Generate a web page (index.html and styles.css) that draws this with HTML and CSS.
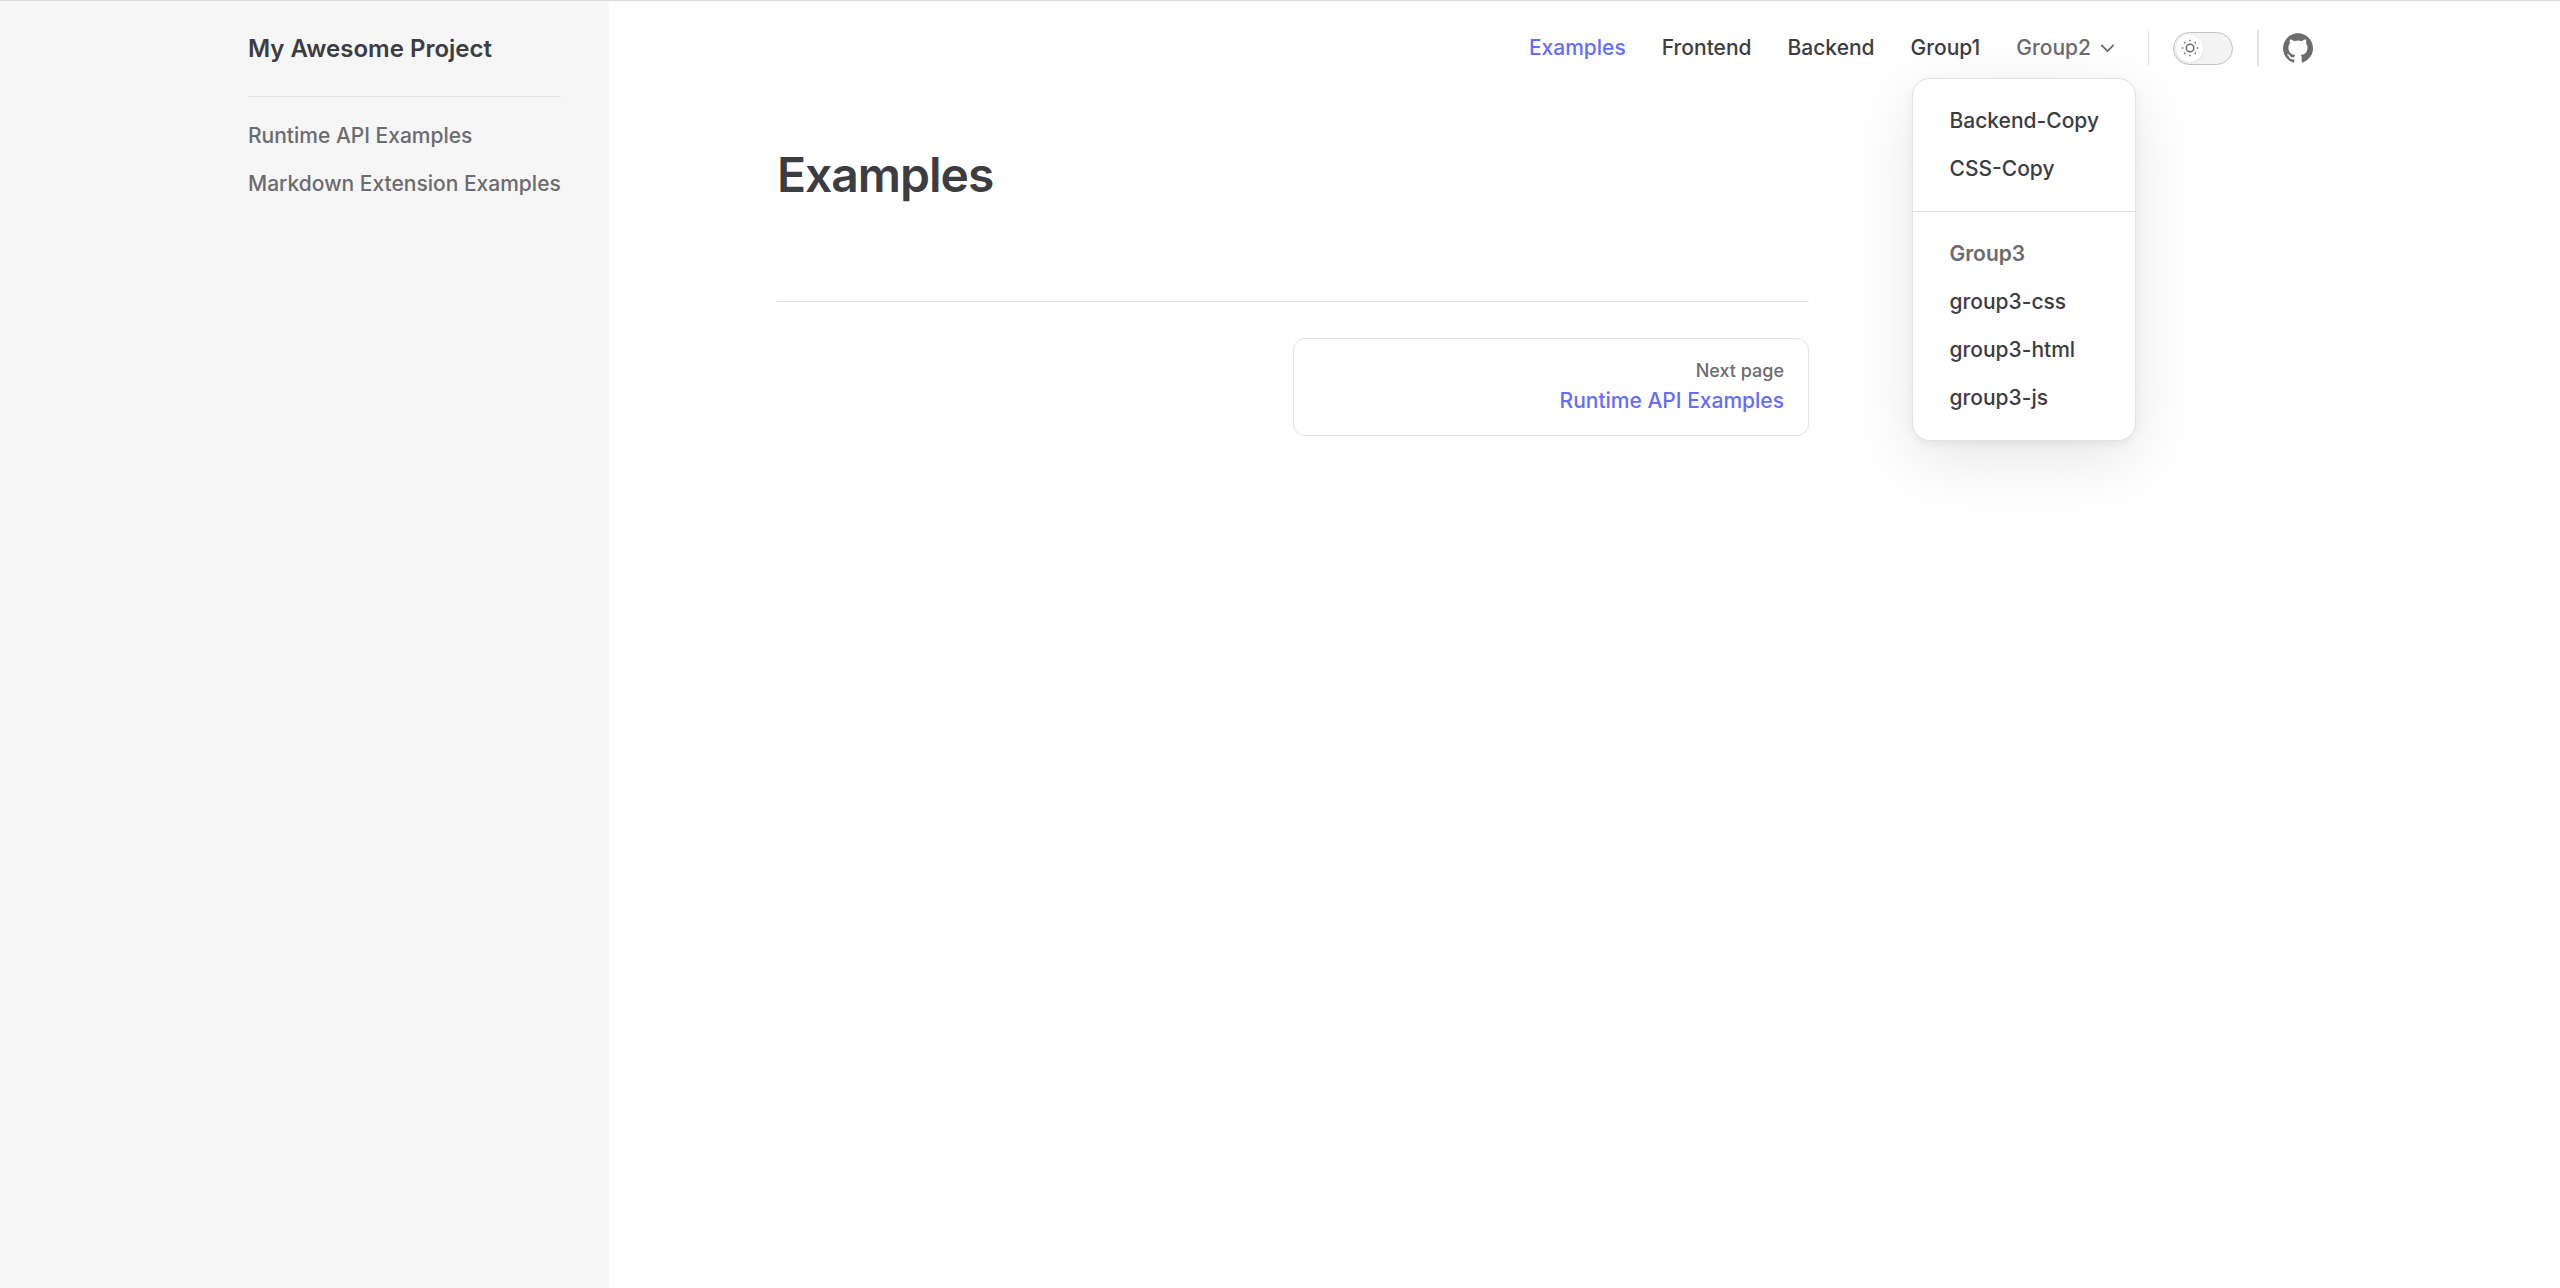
FILE: index.html
```html
<!DOCTYPE html>
<html lang="en">
<head>
<meta charset="utf-8">
<meta name="viewport" content="width=device-width, initial-scale=1">
<title>Examples | My Awesome Project</title>
<link rel="stylesheet" href="styles.css">
</head>
<body>
<div class="layout">
  <aside class="sidebar">
    <a class="site-title" href="#">My Awesome Project</a>
    <nav class="sidebar-nav" aria-label="Sidebar">
      <a href="#">Runtime API Examples</a>
      <a href="#">Markdown Extension Examples</a>
    </nav>
  </aside>
  <div class="page">
    <header class="navbar">
      <nav class="menu" aria-label="Main">
        <a class="menu-link active" href="#">Examples</a>
        <a class="menu-link" href="#">Frontend</a>
        <a class="menu-link" href="#">Backend</a>
        <a class="menu-link" href="#">Group1</a>
        <div class="flyout">
          <button class="flyout-button" type="button" aria-haspopup="true" aria-expanded="true">
            Group2
            <svg class="chevron" viewBox="0 0 24 24" aria-hidden="true"><path d="M5.5 8.5l6.5 6.5 6.5-6.5"/></svg>
          </button>
          <div class="flyout-menu">
            <div class="flyout-group">
              <a href="#">Backend-Copy</a>
              <a href="#">CSS-Copy</a>
            </div>
            <div class="flyout-group">
              <p class="flyout-title">Group3</p>
              <a href="#">group3-css</a>
              <a href="#">group3-html</a>
              <a href="#">group3-js</a>
            </div>
          </div>
        </div>
      </nav>
      <div class="appearance">
        <button class="switch" type="button" role="switch" aria-checked="false" aria-label="Toggle dark mode">
          <span class="switch-knob">
            <svg class="sun" viewBox="0 0 24 24" aria-hidden="true"><circle cx="12" cy="12" r="5"/><path d="M12 1v2M12 21v2M1 12h2M21 12h2M4.2 4.2l1.4 1.4M18.4 18.4l1.4 1.4M4.2 19.8l1.4-1.4M18.4 5.6l1.4-1.4"/></svg>
          </span>
        </button>
      </div>
      <div class="social">
        <a href="#" aria-label="GitHub">
          <svg class="github" viewBox="0 0 24 24" aria-hidden="true"><path d="M12 .297c-6.63 0-12 5.373-12 12 0 5.303 3.438 9.8 8.205 11.385.6.113.82-.258.82-.577 0-.285-.01-1.04-.015-2.04-3.338.724-4.042-1.61-4.042-1.61C4.422 18.07 3.633 17.7 3.633 17.7c-1.087-.744.084-.729.084-.729 1.205.084 1.838 1.236 1.838 1.236 1.07 1.835 2.809 1.305 3.495.998.108-.776.417-1.305.76-1.605-2.665-.3-5.466-1.332-5.466-5.93 0-1.31.465-2.38 1.235-3.22-.135-.303-.54-1.523.105-3.176 0 0 1.005-.322 3.3 1.23.96-.267 1.98-.399 3-.405 1.02.006 2.04.138 3 .405 2.28-1.552 3.285-1.23 3.285-1.23.645 1.653.24 2.873.12 3.176.765.84 1.23 1.91 1.23 3.22 0 4.61-2.805 5.625-5.475 5.92.42.36.81 1.096.81 2.22 0 1.606-.015 2.896-.015 3.286 0 .315.21.69.825.57C20.565 22.092 24 17.592 24 12.297c0-6.627-5.373-12-12-12"/></svg>
        </a>
      </div>
    </header>
    <main class="doc">
      <h1>Examples</h1>
      <footer class="doc-footer">
        <a class="pager" href="#">
          <span class="pager-desc">Next page</span>
          <span class="pager-title">Runtime API Examples</span>
        </a>
      </footer>
    </main>
  </div>
</div>
</body>
</html>
```
FILE: styles.css
```css
:root {
  --text-1: #3c3c43;
  --text-2: #6b6b70;
  --brand: #646cff;
  --divider: #e2e2e3;
  --gutter: max(0px, (100vw - 2160px) / 2);
}

* { box-sizing: border-box; }

body {
  margin: 0;
  font-family: Inter, "Liberation Sans", sans-serif;
  font-size: 21px;
  font-weight: 500;
  line-height: 36px;
  color: var(--text-1);
  background: #fff;
}

a { color: inherit; text-decoration: none; }

h1, p { margin: 0; }

button {
  padding: 0;
  border: 0;
  background: none;
  font: inherit;
  color: inherit;
  cursor: pointer;
}

.layout {
  display: flex;
  min-height: 100vh;
  border-top: 1px solid #dcdcdc;
}

.sidebar {
  flex: none;
  width: calc(var(--gutter) + 409px);
  padding: 0 48px 48px calc(var(--gutter) + 48px);
  background: #f6f6f7;
}

.site-title {
  display: flex;
  align-items: center;
  height: 96px;
  border-bottom: 1px solid var(--divider);
  font-size: 24px;
  font-weight: 600;
}

.sidebar-nav {
  display: flex;
  flex-direction: column;
  gap: 12px;
  padding-top: 21px;
  color: var(--text-2);
  white-space: nowrap;
}

.page { flex: 1; min-width: 0; }

.navbar {
  display: flex;
  justify-content: flex-end;
  align-items: center;
  height: 94px;
  padding-right: calc(var(--gutter) + 47px);
}

.menu { display: flex; }

.menu-link { padding: 0 18px; line-height: 94px; }

.active { color: var(--brand); }

.flyout { position: relative; }

.flyout-button {
  display: flex;
  align-items: center;
  gap: 6px;
  height: 94px;
  padding: 0 18px;
  color: var(--text-2);
}

.chevron {
  width: 21px;
  height: 21px;
  fill: none;
  stroke: currentColor;
  stroke-width: 2;
  stroke-linecap: round;
  stroke-linejoin: round;
}

.flyout-menu {
  position: absolute;
  top: 77px;
  right: 0;
  z-index: 1;
  min-width: 192px;
  border: 1px solid var(--divider);
  border-radius: 18px;
  background: #fff;
  box-shadow: 0 18px 66px rgba(0, 0, 0, .1), 0 3px 9px rgba(0, 0, 0, .06);
  white-space: nowrap;
}

.flyout-group { padding: 18px; }

.flyout-group + .flyout-group { border-top: 1px solid var(--divider); }

.flyout-group > * {
  display: block;
  padding: 0 18px;
  line-height: 48px;
}

.flyout-title { color: var(--text-2); font-weight: 600; }

.appearance, .social { display: flex; align-items: center; }

.appearance::before, .social::before {
  content: "";
  width: 1px;
  height: 36px;
  margin: 0 24px 0 12px;
  background: var(--divider);
}

.social::before { width: 2px; margin-left: 24px; }

.switch {
  width: 60px;
  height: 33px;
  padding: 2px;
  border: 1px solid #c2c2c4;
  border-radius: 17px;
  background: #f3f3f4;
}

.switch-knob {
  display: flex;
  align-items: center;
  justify-content: center;
  width: 27px;
  height: 27px;
  border-radius: 50%;
  background: #fff;
  box-shadow: 0 1px 3px rgba(0, 0, 0, .08);
}

.sun {
  width: 18px;
  height: 18px;
  fill: none;
  stroke: var(--text-2);
  stroke-width: 2;
  stroke-linecap: butt;
}

.github {
  display: block;
  width: 30px;
  height: 30px;
  fill: var(--text-2);
}

.doc {
  width: 100%;
  max-width: 1200px;
  padding: 50px 0 96px 168px;
}

h1 {
  font-size: 48px;
  line-height: 60px;
  font-weight: 600;
  letter-spacing: -1px;
}

.doc-footer {
  display: grid;
  grid-template-columns: 1fr 1fr;
  margin-top: 96px;
  padding-top: 36px;
  border-top: 1px solid var(--divider);
}

.pager {
  display: flex;
  flex-direction: column;
  grid-column: 2;
  padding: 17px 24px 19px;
  border: 1px solid var(--divider);
  border-radius: 12px;
  line-height: 30px;
  text-align: right;
}

.pager-desc { color: var(--text-2); font-size: 18px; }

.pager-title { color: var(--brand); }
```
